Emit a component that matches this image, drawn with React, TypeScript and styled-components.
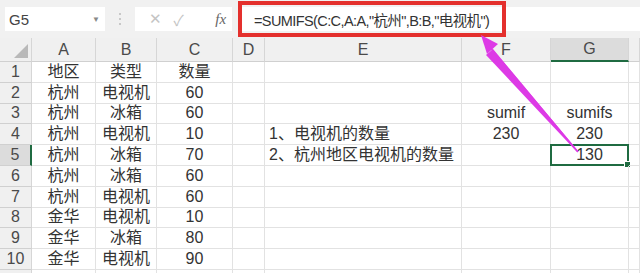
import React from "react";
import styled, { createGlobalStyle, css } from "styled-components";

const GlobalStyle = createGlobalStyle`
  html, body { margin: 0; padding: 0; background: #ffffff; overflow: hidden; }
  * { box-sizing: border-box; }
`;

const FONT = `"Liberation Sans", "Noto Sans CJK SC", sans-serif`;

const Page = styled.div`
  position: relative;
  width: 640px;
  height: 273px;
  overflow: hidden;
  font-family: ${FONT};
  color: #333;
`;

const FormulaBar = styled.div`
  height: 38px;
  display: flex;
  align-items: center;
  padding-left: 5px;
  background: #f1f1f1;
`;

const NameBox = styled.div`
  width: 100px;
  height: 24px;
  background: #fff;
  display: flex;
  align-items: center;
  justify-content: space-between;
  padding: 0 5px 0 4px;
  font-size: 15px;
  color: #444;
`;

const Caret = styled.span`
  font-size: 8px;
  color: #888;
`;

const Dots = styled.div`
  width: 30px;
  display: flex;
  flex-direction: column;
  align-items: center;
  gap: 3px;
  & > i {
    width: 2px;
    height: 2px;
    background: #c8c8c8;
    display: block;
  }
`;

const FxGroup = styled.div`
  width: 97px;
  height: 24px;
  background: #fff;
  display: flex;
  align-items: center;
  justify-content: space-around;
  padding: 0 0 0 8px;
  color: #c4c4c4;
  font-size: 15px;
`;

const FxLabel = styled.span`
  font-family: "Liberation Serif", serif;
  font-style: italic;
  color: #666;
  font-size: 15px;
  margin-left: 20px;
`;

const FormulaInput = styled.div`
  flex: 1;
  height: 24px;
  margin-left: 6px;
  background: #fff;
  display: flex;
  align-items: center;
  padding-left: 16px;
  font-size: 14.5px;
  letter-spacing: -0.6px;
  color: #333;
  white-space: nowrap;
`;

const RedFrame = styled.div`
  position: absolute;
  left: 238px;
  top: 1px;
  width: 268px;
  height: 36px;
  border: 4px solid #e4302d;
  pointer-events: none;
`;

const COLS = [32, 64, 61, 76, 32, 197, 89, 78, 11];

const Sheet = styled.div`
  display: grid;
  grid-template-columns: ${COLS.map((c) => c + "px").join(" ")};
  grid-template-rows: 24px repeat(11, 20.8px);
`;

const HeaderCell = styled.div<{ $sel?: boolean; $side?: "col" | "row" | "corner" }>`
  position: relative;
  background: #f0f0f0;
  border-right: 1px solid #d6d6d6;
  border-bottom: 1px solid #d0d0d0;
  display: flex;
  align-items: center;
  justify-content: center;
  font-size: 16px;
  line-height: 1;
  color: #4a4a4a;
  ${(p) =>
    p.$sel &&
    css`
      background: #dcdcdc;
      ${p.$side === "col"
        ? "border-bottom: 2px solid #1f6b41;"
        : "border-right: 2px solid #1f6b41;"}
    `}
`;

const Corner = styled.div`
  width: 0;
  height: 0;
  border-left: 14px solid transparent;
  border-bottom: 14px solid #b9b9b9;
  position: absolute;
  right: 3px;
  bottom: 3px;
`;

const Cell = styled.div<{ $align?: "left" | "center" }>`
  position: relative;
  border-right: 1px solid #e2e2e2;
  border-bottom: 1px solid #e2e2e2;
  display: flex;
  align-items: center;
  justify-content: ${(p) => (p.$align === "left" ? "flex-start" : "center")};
  padding-left: ${(p) => (p.$align === "left" ? "4px" : "0")};
  font-size: 16px;
  line-height: 1;
  color: #333;
  white-space: nowrap;
  overflow: visible;
`;

const ActiveFrame = styled.div`
  position: absolute;
  left: -1px;
  top: -1px;
  right: -1px;
  bottom: -1px;
  border: 2px solid #1f6b41;
  pointer-events: none;
  &::after {
    content: "";
    position: absolute;
    right: -4px;
    bottom: -4px;
    width: 5px;
    height: 5px;
    background: #1f6b41;
    border: 1px solid #fff;
  }
`;

const Overlay = styled.svg`
  position: absolute;
  left: 0;
  top: 0;
  pointer-events: none;
`;

type Row = string[];
const data: Row[] = [
  ["地区", "类型", "数量", "", "", "", ""],
  ["杭州", "电视机", "60", "", "", "", ""],
  ["杭州", "冰箱", "60", "", "", "sumif", "sumifs"],
  ["杭州", "电视机", "10", "", "1、电视机的数量", "230", "230"],
  ["杭州", "冰箱", "70", "", "2、杭州地区电视机的数量", "", "130"],
  ["杭州", "冰箱", "60", "", "", "", ""],
  ["杭州", "电视机", "60", "", "", "", ""],
  ["金华", "电视机", "10", "", "", "", ""],
  ["金华", "冰箱", "80", "", "", "", ""],
  ["金华", "电视机", "90", "", "", "", ""],
  ["", "", "", "", "", "", ""],
];

const letters = ["A", "B", "C", "D", "E", "F", "G", ""];

export default function App() {
  return (
    <Page>
      <GlobalStyle />
      <FormulaBar>
        <NameBox>
          <span>G5</span>
          <Caret>▼</Caret>
        </NameBox>
        <Dots>
          <i />
          <i />
          <i />
        </Dots>
        <FxGroup>
          <span>✕</span>
          <span>✓</span>
          <FxLabel>fx</FxLabel>
        </FxGroup>
        <FormulaInput>=SUMIFS(C:C,A:A,"杭州",B:B,"电视机")</FormulaInput>
      </FormulaBar>
      <Sheet>
        <HeaderCell $side="corner">
          <Corner />
        </HeaderCell>
        {letters.map((l, i) => (
          <HeaderCell key={i} $side="col" $sel={l === "G"}>
            {l}
          </HeaderCell>
        ))}
        {data.map((row, r) => (
          <React.Fragment key={r}>
            <HeaderCell $side="row" $sel={r === 4}>
              {r < 10 ? r + 1 : ""}
            </HeaderCell>
            {row.map((v, c) => (
              <Cell key={c} $align={c === 4 ? "left" : "center"}>
                {v}
                {r === 4 && c === 6 && <ActiveFrame />}
              </Cell>
            ))}
            <Cell />
          </React.Fragment>
        ))}
      </Sheet>
      <RedFrame />
      <Overlay width="640" height="273" viewBox="0 0 640 273">
        <polygon points="577,152 578,151 493,49 486,55" fill="#dd3ae6" />
        <polygon points="481,35 498,44 487,54" fill="#dd3ae6" />
        <line x1="578" y1="152" x2="489" y2="46" stroke="#dd3ae6" strokeWidth="1.5" />
      </Overlay>
    </Page>
  );
}
